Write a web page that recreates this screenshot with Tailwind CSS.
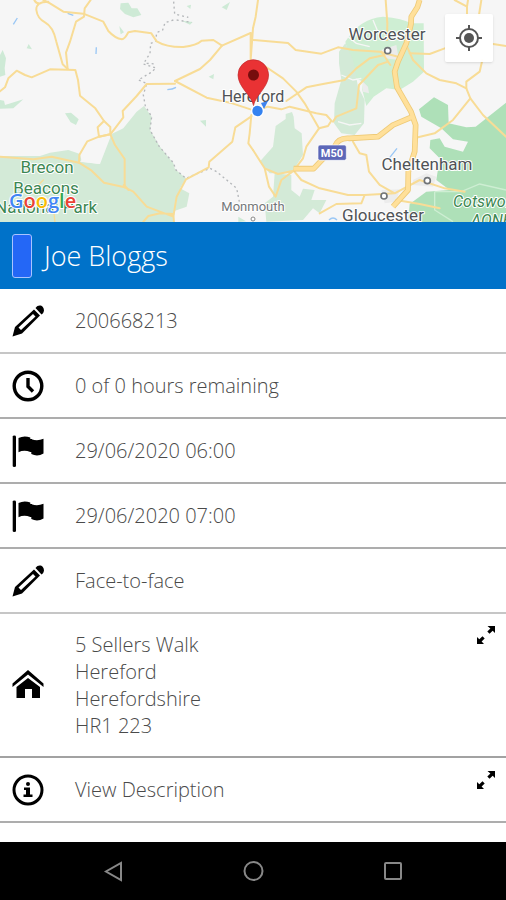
<!DOCTYPE html>
<html lang="en">
<head>
<meta charset="utf-8">
<meta name="viewport" content="width=device-width, initial-scale=1">
<title>Joe Bloggs</title>
<script src="https://cdn.jsdelivr.net/npm/@tailwindcss/browser@4"></script>
</head>
<body class="bg-white">
<div class="flex h-screen flex-col overflow-hidden font-['Open_Sans',sans-serif] font-light">

  <section class="relative h-[222px] shrink-0 overflow-hidden bg-[#f5f5f5]" aria-label="Map">
    <svg class="block h-full w-full" viewBox="0 0 506 222" preserveAspectRatio="xMidYMid slice" role="img" aria-label="Map of Hereford">
      <rect width="506" height="222" fill="#f6f6f6"/>
      <!-- west half -->
      <g transform="scale(.33333)">
        <g fill="#ceead6">
          <path d="M0 468 L120 468 150 458 205 450 240 462 245 485 300 492 335 402 370 385 410 335 432 318 455 350 450 390 480 440 520 490 525 508 558 535 540 565 568 580 560 620 525 632 520 668 0 668Z" fill="#d3ead7"/>
          <path d="M362 10 L385 8 395 25 412 25 424 45 400 52 375 42 360 27Z M195 340 L213 338 236 358 228 375 212 367Z M0 300 L12 302 15 315 70 298 40 325 0 326Z M8 150 L18 175 14 205 16 225 0 230 0 165Z M80 145 L86 132 96 148Z M358 78 L372 97 362 103Z M665 22 L690 6 680 30Z M626 230 L642 222 640 238Z M600 362 L618 360 618 380Z M545 62 L578 66 570 74Z M560 18 L573 14 571 27Z M715 650 L738 664 715 666Z"/>
        </g>
        <path d="M240 485 L262 462 262 430 297 412 331 403 298 492Z" fill="#f6f6f6"/>
        <g fill="none" stroke="#9ac7f5" stroke-width="4"><path d="M40 73 L52 54 M203 40 L220 46 M289 142 L288 162 M502 269 Q518 268 528 262"/></g>
        <g fill="none" stroke="#b4b7ba" stroke-width="4" stroke-dasharray="6 9">
          <path d="M521 5 L524 42 565 52 M520 60 L495 68 488 90 470 98 467 124 452 130 450 160 430 192 468 204 452 218 415 240 440 250 430 285 436 318 455 350 450 390 478 440 520 488 528 510 558 535 630 505 650 515 710 565 718 605"/>
          <path d="M530 60 L575 67 M440 190 L467 192"/>
        </g>
        <g fill="none" stroke="#f8dc96" stroke-width="6" stroke-linejoin="round" stroke-linecap="round">
          <path d="M103 0 Q108 12 122 10 M145 5 Q108 5 109 30 Q112 55 135 67 Q160 80 169 125 L188 193 203 207"/>
          <path d="M130 0 L150 10 190 35 250 41 310 65 325 93 Q345 115 366 118 Q374 118 385 97 L405 93 454 100 470 124 Q500 142 550 141 Q590 136 605 122 L640 120 666 137 752 99"/>
          <path d="M272 0 L254 25 252 50 228 65 210 125 198 158 203 207"/>
          <path d="M0 274 L15 262 25 235 50 212 75 225 95 232 150 208 226 210 234 240 240 287 286 325 312 363 331 381 331 403 345 435 374 477 374 562"/>
          <path d="M666 137 L630 180 600 207 525 243 M525 251 L440 252 410 288 368 333 370 352 345 385 331 403 297 410 262 424 238 465 237 488 155 470 100 478 0 470"/>
          <path d="M525 243 L620 293 690 308 754 329"/>
          <path d="M312 363 L293 382 297 410 331 403"/>
          <path d="M237 488 L275 512 312 548 374 562 400 575 440 620 520 650 M430 665 L445 648 480 640 520 642 522 668 M520 650 L530 590 558 538 626 502 628 485 697 425 706 382 754 349 M374 562 Q365 545 385 570"/>
          <path d="M754 345 L749 400 745 430 759 450 M752 99 L752 180 759 85"/>
          <path d="M160 620 L165 668 M100 570 L130 540" stroke-width="4"/>
        </g>
      </g>
      <!-- east half -->
      <g transform="translate(253 0) scale(.33333)">
        <path d="M277 125 Q320 55 390 50 Q450 55 475 70 L512 70 513 215 480 245 440 270 400 265 362 290 340 318 328 270 330 245 300 230 290 180Z" fill="#ceeed3"/>
        <g fill="#d3ead7">
          <path d="M258 155 L277 130 300 180 315 260 335 300 333 370 305 405 265 400 243 370 245 310 265 240 258 190Z"/>
          <path d="M68 378 L98 357 98 342 117 336 122 350 125 385 146 400 150 465 115 520 50 520 20 485 60 440Z"/>
          <path d="M65 520 L115 525 115 570 140 590 150 566 185 570 175 600 220 600 200 640 180 625 150 660 40 665 35 610 60 590Z"/>
        </g>
        <g fill="#aee0b8">
          <path d="M498 328 L543 292 585 315 587 370 640 382 668 380 759 308 759 668 465 668 470 612 520 575 590 570 550 540 560 475 530 445 532 420 560 415 575 440 630 455 645 425 600 418 565 385 505 350Z"/>
        </g>
        <path d="M545 575 L625 575 680 552 759 570 M545 575 L545 630 600 665" fill="none" stroke="#ceeed3" stroke-width="4"/>
        <path d="M330 245 L345 260 348 280 330 275Z M480 540 L520 520 550 530 540 560 480 555Z M385 570 L440 568 430 605 395 610Z M385 150 L430 135 438 180 395 175Z" fill="#ececec"/>
        <path d="M410 473 L432 445 M228 660 Q240 648 252 660" fill="none" stroke="#9ac7f5" stroke-width="4"/>
        <path d="M285 110 L310 130 350 140 M360 60 L385 120 M265 225 L300 240 325 235 M255 365 L290 375 325 370" fill="none" stroke="#f6f6f6" stroke-width="4"/>
        <g fill="none" stroke="#f8dc96" stroke-width="6" stroke-linejoin="round" stroke-linecap="round">
          <path d="M0 120 L105 129 128 150 205 161 255 142 300 150 380 155 435 170"/>
          <path d="M15 0 L8 50 0 85 M35 198 L90 235 130 275 155 310 198 385"/>
          <path d="M0 335 L45 320 85 328 110 320 190 340 220 345 235 362 225 378 198 385 160 440 150 475 122 512"/>
          <path d="M100 303 L160 262 210 252 275 240 310 205 350 175 395 165 M240 365 L250 350 310 325 318 255 375 195 405 185 M385 155 L412 195"/>
          <path d="M398 0 L403 70 402 120 M460 135 L480 180 520 220 560 240 610 250 640 265 652 295 600 360 545 400 495 412"/>
          <path d="M470 160 L530 162 575 145 M640 265 L640 245 680 215 688 180 M652 295 L690 345 759 410"/>
          <path d="M605 0 L642 20 642 45 M645 0 L642 20 M685 0 L678 45 M720 132 L759 138"/>
          <path d="M0 450 L35 505 48 560 68 590 85 540 122 512 M35 505 L75 522 122 512 145 540 200 565 285 585 335 585"/>
          <path d="M300 425 L320 460 340 465 348 515 380 555 425 580 500 540 575 565 635 575 M425 580 L335 585 325 610 250 612 200 640 M430 600 L500 612 560 625"/>
        </g>
        <g fill="none" stroke-linejoin="round">
          <path d="M122 506 H182 L245 440 Q255 412 290 415 L375 410 420 375 474 352 M500 0 L493 22 475 50 474 72 460 130 435 185 425 215 432 262 474 335 488 375 485 455 466 515 465 570 420 620" stroke="#eeca77" stroke-width="17"/>
          <path d="M122 506 H182 L245 440 Q255 412 290 415 L375 410 420 375 474 352 M500 0 L493 22 475 50 474 72 460 130 435 185 425 215 432 262 474 335 488 375 485 455 466 515 465 570 420 620" stroke="#ffe09a" stroke-width="12"/>
        </g>
        <g fill="#fff" stroke="#707478" stroke-width="5"><circle cx="404" cy="152" r="9"/><circle cx="523" cy="542" r="9"/><circle cx="393" cy="588" r="9"/></g>
        <rect x="195" y="435" width="85" height="46" rx="6" fill="#5c67b8" stroke="#fff" stroke-width="2"/>
      </g>
      <text x="332" y="157" text-anchor="middle" fill="#fff" font-family="Roboto, sans-serif" font-size="11" font-weight="700">M50</text>
      <g font-family="Roboto, sans-serif" font-weight="400" stroke="#fff" stroke-width="2" paint-order="stroke" stroke-linejoin="round">
        <g fill="#505357" font-size="17" text-anchor="middle">
          <text x="387" y="40">Worcester</text>
          <text x="253" y="102" font-size="16">Hereford</text>
          <text x="427" y="170">Cheltenham</text>
          <text x="383" y="221">Gloucester</text>
          <text x="253" y="211" font-size="13" fill="#74777a">Monmouth</text>
        </g>
        <g fill="#3c8752" font-size="17" text-anchor="middle">
          <text x="47" y="173">Brecon</text>
          <text x="46" y="194">Beacons</text>
          <text x="46" y="213">National Park</text>
        </g>
        <g fill="#3c8752" font-size="16" font-style="italic">
          <text x="453" y="207">Cotswolds</text>
          <text x="471" y="226">AONB</text>
        </g>
      </g>
      <circle cx="253" cy="219" r="2" fill="#fff" stroke="#888"/>
      <text x="9" y="208" font-family="Open Sans, sans-serif" font-size="20" font-weight="600" stroke="#fff" stroke-width="2" paint-order="stroke"><tspan fill="#4285f4">G</tspan><tspan fill="#ea4335">o</tspan><tspan fill="#fbbc04">o</tspan><tspan fill="#4285f4">g</tspan><tspan fill="#34a853">l</tspan><tspan fill="#ea4335">e</tspan></text>
      <path d="M261 103 L268 101 264 109Z" fill="#3d83ee"/>
      <circle cx="257.5" cy="111" r="6.500" fill="#fff"/>
      <circle cx="257.5" cy="111" r="5.200" fill="#3482f0"/>
      <path d="M253.500 105.500 C252 96 238 87 238 75 A15.300 15.300 0 0 1 268.600 75 C268.600 87 255 96 253.500 105.500Z" fill="#e93234" stroke="#c22b2c" stroke-width=".7"/>
      <circle cx="253.500" cy="75" r="5.500" fill="#760d0d"/>
    </svg>
    <button type="button" aria-label="My location" class="absolute top-[14px] right-[13px] flex size-12 items-center justify-center rounded-xs bg-white/95 shadow">
      <svg class="size-7" viewBox="0 0 28 28" fill="none" stroke="#555" stroke-width="2"><circle cx="14" cy="14" r="9"/><circle cx="14" cy="14" r="5" fill="#555" stroke="none"/><path d="M14 1v5M14 22v5M1 14h5M22 14h5"/></svg>
    </button>
  </section>

  <header class="flex h-[67px] shrink-0 items-center gap-3 bg-[#0072c9] px-3">
    <span class="h-11 w-5 rounded-[3px] border border-[#a9c4ff] bg-[#2467f6]"></span>
    <h1 class="text-[27px] leading-9 text-white">Joe Bloggs</h1>
  </header>

  <main class="min-h-0 flex-1 overflow-hidden text-xl leading-[27px] text-[#4a4a4a]">
    <svg class="hidden">
      <symbol id="pencil" viewBox="0 0 32 32">
        <path fill-rule="evenodd" d="M.5 31.500 L3 22 22 4.500 28 10.500 10 28.500Z M6.500 22.500 L9 25 23.500 11.500 21 9Z"/>
        <path d="M23.500 3 C25.500 0 29 -.2 30.800 2 C32.800 4.500 32 8 29.500 9.500Z"/>
      </symbol>
      <symbol id="flag" viewBox="0 0 32 32">
        <path d="M.7 1.500 Q.7 .5 2.300 .5 Q4 .5 4 1.500 V31 Q4 32 2.300 32 Q.7 32 .7 31Z"/>
        <path d="M6.500 3 Q12 .2 18.300 2.500 V17 Q12 14.500 6.500 17.300Z"/>
        <path d="M19.300 4 Q25 6.500 31.500 3.800 V18.500 Q25.500 22 19.300 19Z M18 4h2v13h-2z"/>
      </symbol>
      <symbol id="expand" viewBox="0 0 20 20">
        <path d="M11.500 1H19v7l-2.300-2.200-3.200 3-2.200-2.200 3.100-3.200z M1 12l2.300 2.200 3.200-3 2.200 2.200-3.100 3.200L8 19H1z"/>
      </symbol>
    </svg>
    <ul>
      <li class="flex h-[65px] items-center gap-[31px] border-b-2 border-[#c6c6c6] px-3"><svg class="size-8 shrink-0 text-black" fill="currentColor"><use href="#pencil"/></svg><span>200668213</span></li>
      <li class="flex h-[65px] items-center gap-[31px] border-b-2 border-[#adadad] px-3"><svg class="size-8 shrink-0" viewBox="0 0 32 32" fill="none" stroke="#000"><circle cx="16" cy="16" r="13.800" stroke-width="3.400"/><path d="M16 8v8.500l5 5" stroke-width="3.400"/></svg><span>0 of 0 hours remaining</span></li>
      <li class="flex h-[65px] items-center gap-[31px] border-b-2 border-[#adadad] px-3"><svg class="size-8 shrink-0"><use href="#flag"/></svg><span>29/06/2020 06:00</span></li>
      <li class="flex h-[65px] items-center gap-[31px] border-b-2 border-[#adadad] px-3"><svg class="size-8 shrink-0"><use href="#flag"/></svg><span>29/06/2020 07:00</span></li>
      <li class="flex h-[65px] items-center gap-[31px] border-b-2 border-[#c6c6c6] px-3"><svg class="size-8 shrink-0"><use href="#pencil"/></svg><span>Face-to-face</span></li>
      <li class="flex items-center gap-[31px] border-b-2 border-[#a2a2a2] py-[17px] pr-[10px] pl-3">
        <svg class="size-8 shrink-0" viewBox="0 0 32 32"><path d="M16 1 L31.500 14.500 V18 L16 5.500 .5 18 V14.500Z"/><path d="M16 9 L28 18 V29 H20 V20 H13 V29 H4.500 V18Z"/></svg>
        <address class="flex-1 not-italic">5 Sellers Walk<br>Hereford<br>Herefordshire<br>HR1 223</address>
        <button type="button" aria-label="Expand address" class="-mt-[6px] self-start"><svg class="block size-5"><use href="#expand"/></svg></button>
      </li>
      <li class="flex h-[65px] items-center gap-[31px] border-b-2 border-[#adadad] pr-[10px] pl-3">
        <svg class="size-8 shrink-0" viewBox="0 0 32 32"><circle cx="16" cy="16" r="14" fill="none" stroke="#000" stroke-width="3"/><circle cx="16" cy="10" r="2"/><path d="M12 13.500h6v7h2.500V23h-9v-2.500H14V16h-2z"/></svg>
        <span class="flex-1">View Description</span>
        <button type="button" aria-label="Expand description" class="mt-3 self-start"><svg class="block size-5"><use href="#expand"/></svg></button>
      </li>
    </ul>
  </main>

  <nav class="flex h-[58px] shrink-0 items-center justify-center gap-[116px] bg-black" aria-label="System">
    <button type="button" aria-label="Back"><svg class="block size-6" viewBox="0 0 24 24" fill="none" stroke="#888" stroke-width="2"><path d="M20 4v17L5 12.500z"/></svg></button>
    <button type="button" aria-label="Home"><svg class="block size-6" viewBox="0 0 24 24" fill="none" stroke="#888" stroke-width="2"><circle cx="12.500" cy="12" r="9"/></svg></button>
    <button type="button" aria-label="Recent apps"><svg class="block size-6" viewBox="0 0 24 24" fill="none" stroke="#888" stroke-width="2"><rect x="4" y="4" width="16" height="16" rx="1"/></svg></button>
  </nav>
</div>
</body>
</html>
